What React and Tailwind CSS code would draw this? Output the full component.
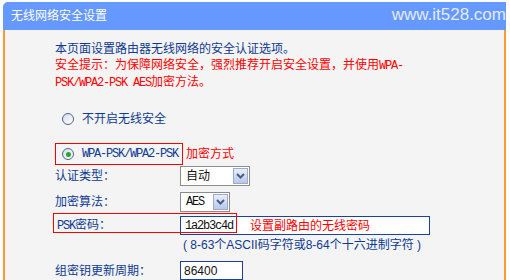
import React from "react";

const Mono = ({ children }) => (
  <span className="font-mono text-[12px] tracking-[-1.2px]">{children}</span>
);

function Radio({ checked }) {
  return (
    <span className="w-[12px] h-[12px] rounded-full border border-[#4f6590] bg-gradient-to-br from-[#d5dce8] to-white flex items-center justify-center shrink-0">
      {checked && <span className="w-[5px] h-[5px] rounded-full bg-[#23a923]" />}
    </span>
  );
}

function Select({ value, width }) {
  return (
    <div className={`h-[20px] ${width} border border-[#8c8c8c] bg-white flex items-stretch`}>
      <div className="flex-1 flex items-center pl-[5px] text-[#111]">{value}</div>
      <div className="w-[15px] m-[1px] border border-[#98abd1] bg-gradient-to-b from-[#e9effb] to-[#b7c8ea] flex items-center justify-center">
        <svg width="9" height="6" viewBox="0 0 9 6">
          <path d="M1 1 L4.5 4.5 L8 1" stroke="#4a5d82" strokeWidth="2" fill="none" />
        </svg>
      </div>
    </div>
  );
}

export default function App() {
  return (
    <div className="w-[510px] h-[280px] bg-white overflow-hidden pt-[2px] pl-[3px] font-[family-name:'Liberation_Sans','Noto_Sans_CJK_SC',sans-serif] text-[12px]">
      <div className="w-[503px] h-[28px] bg-[#6699ff] rounded-tl-[5px] flex items-center justify-between pl-[8px]">
        <span className="text-white text-[12px] leading-none">无线网络安全设置</span>
        <span className="text-[#e4ebff] text-[17px] leading-none -mt-[3px]">www.it528.com</span>
      </div>
      <div className="w-[503px] h-[250px] bg-[#f4f4f4] border-l-2 border-r-2 border-[#ff9933] pl-[50px] pt-[11px] text-[#0e3a92]">
        <div className="leading-[16px]">本页面设置路由器无线网络的安全认证选项。</div>
        <div className="leading-[16px] text-[#ff0000]">
          安全提示：为保障网络安全，强烈推荐开启安全设置，并使用<Mono>WPA-</Mono>
        </div>
        <div className="leading-[16px] text-[#ff0000]">
          <Mono>PSK/WPA2-PSK AES</Mono>加密方法。
        </div>

        <div className="mt-[18px] h-[20px] flex items-center pl-[7px] gap-[8px]">
          <Radio />
          <span>不开启无线安全</span>
        </div>

        <div className="mt-[14px] flex items-center">
          <div className="h-[22px] w-[128px] border border-[#ff0000] flex items-center pl-[6px] gap-[8px]">
            <Radio checked />
            <Mono>WPA-PSK/WPA2-PSK</Mono>
          </div>
          <span className="ml-[3px] text-[#ff0000]">加密方式</span>
        </div>

        <div className="mt-[1px] h-[20px] flex items-center">
          <span className="w-[125px]">认证类型：</span>
          <Select value="自动" width="w-[70px]" />
        </div>

        <div className="mt-[6px] h-[20px] flex items-center">
          <span className="w-[125px]">加密算法：</span>
          <Select value={<Mono>AES</Mono>} width="w-[50px]" />
        </div>

        <div className="mt-[4px] h-[19px] flex items-center relative">
          <span className="w-[125px] pl-[2px]"><Mono>PSK</Mono>密码：</span>
          <div className="h-[19px] w-[250px] border border-[#1a3fa6] bg-white flex items-center pl-[4px] text-[#111]">
            <Mono>1a2b3c4d</Mono>
            <span className="ml-[17px] text-[#ff0000]">设置副路由的无线密码</span>
          </div>
          <div className="absolute left-[-2px] top-[-3px] w-[184px] h-[20px] border border-[#ff0000] pointer-events-none" />
        </div>

        <div className="mt-[2px] leading-[16px] pl-[128px]">( 8-63个ASCII码字符或8-64个十六进制字符 )</div>

        <div className="mt-[8px] h-[19px] flex items-center">
          <span className="w-[125px]">组密钥更新周期：</span>
          <div className="h-[19px] w-[63px] border border-[#1a3fa6] bg-white flex items-center pl-[3px] text-[#111]">86400</div>
        </div>
      </div>
    </div>
  );
}
